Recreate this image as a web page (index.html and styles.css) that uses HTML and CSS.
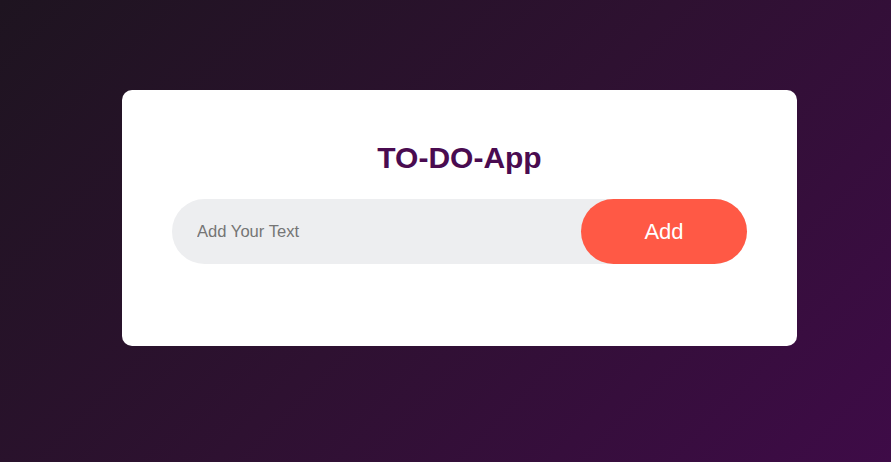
FILE: index.html
```html
<!DOCTYPE html>
<html lang="en">
<head>
<meta charset="utf-8">
<title>TO-DO-App</title>
<link rel="stylesheet" href="styles.css">
</head>
<body>
<div class="container">
  <div class="todo-app">
    <h2 class="title">TO-DO-App</h2>
    <div class="row">
      <input class="field" type="text" placeholder="Add Your Text">
      <button class="add-btn">Add</button>
    </div>
  </div>
</div>
</body>
</html>
```
FILE: styles.css
```css
* { box-sizing: border-box; }
html, body { margin: 0; padding: 0; }
body {
  font-family: "Liberation Sans", Arial, sans-serif;
}
.container {
  width: 100%;
  min-height: 100vh;
  background: linear-gradient(135deg, #1e1420 0%, #2e1131 50%, #3e0b47 100%);
  padding: 90px 0 0 122px;
}
.todo-app {
  width: 675px;
  height: 256px;
  background: #ffffff;
  border-radius: 10px;
  padding: 50px 50px 0 50px;
}
.title {
  margin: 0 0 23px 0;
  font-size: 30px;
  line-height: 36px;
  font-weight: bold;
  color: #4a0b50;
  text-align: center;
}
.row {
  display: flex;
  align-items: center;
  height: 65px;
  background: #edeef0;
  border-radius: 33px;
}
.field {
  flex: 1;
  border: none;
  outline: none;
  background: transparent;
  padding: 0 0 0 25px;
  font-family: "Liberation Sans", Arial, sans-serif;
  font-size: 16.6px;
  color: #333;
}
.field::placeholder { color: #757575; }
.add-btn {
  width: 166px;
  height: 65px;
  border: none;
  outline: none;
  background: #ff5945;
  color: #ffffff;
  font-family: "Liberation Sans", Arial, sans-serif;
  font-size: 22px;
  border-radius: 33px;
  cursor: pointer;
}
```
